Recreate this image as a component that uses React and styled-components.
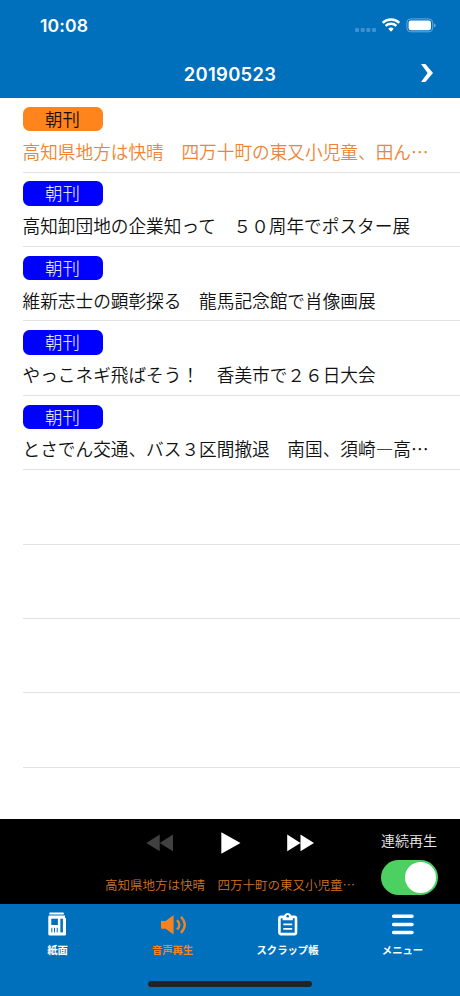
import React, { useState } from 'react';
import styled, { createGlobalStyle } from 'styled-components';

const GlobalStyle = createGlobalStyle`
  * {
    box-sizing: border-box;
  }

  body {
    margin: 0;
    font-family: 'Noto Sans CJK JP', sans-serif;
    background-color: white;
  }

  button {
    padding: 0;
    border: none;
    background: none;
    color: inherit;
    font: inherit;
  }

  svg {
    display: block;
  }
`;

const Screen = styled.div`
  width: 460px;
  height: 996px;
  display: flex;
  flex-direction: column;
  overflow: hidden;
`;

const StyledHeader = styled.header`
  height: 98px;
  flex-shrink: 0;
  background-color: #006fbc;
  color: white;
  font-family: 'Inter', sans-serif;
  font-weight: 600;
`;

const StatusBar = styled.div`
  height: 49px;
  padding: 3px 24px 0 40px;
  display: flex;
  justify-content: space-between;
  align-items: center;
`;

const Clock = styled.span`
  font-size: 17.6px;
  font-weight: 580;
  line-height: 22px;
  letter-spacing: 0.1px;
`;

const TitleBar = styled.div`
  height: 49px;
  padding: 0 26px;
  display: grid;
  grid-template-columns: 1fr auto 1fr;
  align-items: center;
`;

const DateTitle = styled.h1`
  grid-column: 2;
  margin: 0;
  font-size: 18.4px;
  font-weight: 580;
  line-height: 24px;
  letter-spacing: 0.3px;
`;

const NextButton = styled.button`
  justify-self: end;
  padding-bottom: 1px;
`;

const List = styled.ul`
  flex: 1;
  margin: 0;
  padding: 0 0 0 22.5px;
  list-style: none;
  overflow: hidden;
`;

const Item = styled.li`
  height: 74.4px;
  padding-top: 8.8px;
  border-bottom: 1px solid #e2e2e2;
  color: ${({ $active }) => ($active ? '#ee8434' : '#111')};

  &:first-child {
    height: 74.6px;
  }
`;

const Badge = styled.div`
  width: 80px;
  height: 24.5px;
  border-radius: 6.5px;
  background-color: ${({ $active }) => ($active ? '#ff841c' : '#0000ff')};
  color: ${({ $active }) => ($active ? '#1a0d00' : 'white')};
  font-size: 17.4px;
  font-weight: ${({ $active }) => ($active ? 350 : 300)};
  line-height: 24px;
  text-align: center;
`;

const Headline = styled.div`
  margin-top: 8.3px;
  font-size: 17.66px;
  font-weight: 350;
  line-height: 24px;
  white-space: nowrap;
`;

const StyledPlayer = styled.section`
  height: 84.5px;
  flex-shrink: 0;
  padding: 0 22.5px 0 105px;
  display: flex;
  justify-content: space-between;
  background-color: black;
`;

const PlayerMain = styled.div`
  width: 250px;
`;

const Controls = styled.div`
  height: 48px;
  padding: 0 40px 0 41px;
  display: flex;
  justify-content: space-between;
  align-items: center;
`;

const NowPlaying = styled.div`
  margin-top: 9px;
  color: #d27420;
  font-size: 12.5px;
  font-weight: 350;
  line-height: 18px;
  white-space: nowrap;
`;

const Continuous = styled.div`
  width: 57px;
  padding-top: 11px;
  display: flex;
  flex-direction: column;
  align-items: center;
  gap: 10px;
  color: #e8e8e8;
  font-size: 14px;
  font-weight: 350;
  line-height: 20px;
  white-space: nowrap;
`;

const Toggle = styled.button`
  width: 57px;
  height: 35px;
  padding: 2px;
  display: flex;
  justify-content: ${({ $on }) => ($on ? 'flex-end' : 'flex-start')};
  border-radius: 18px;
  background-color: ${({ $on }) => ($on ? '#4cd062' : '#555')};
`;

const Knob = styled.span`
  width: 31px;
  height: 31px;
  border-radius: 50%;
  background-color: white;
`;

const StyledFooter = styled.footer`
  height: 92.5px;
  flex-shrink: 0;
  display: flex;
  flex-direction: column;
  align-items: center;
  background-color: #006fbc;
`;

const Tabs = styled.nav`
  width: 100%;
  height: 77.5px;
  display: grid;
  grid-template-columns: repeat(4, 1fr);
`;

const Tab = styled.button`
  padding-top: 7px;
  display: flex;
  flex-direction: column;
  align-items: center;
  gap: 3.5px;
  color: ${({ $active }) => ($active ? '#f58220' : 'white')};
  font-size: 10.35px;
  font-weight: 700;
  line-height: 16px;
`;

const HomeIndicator = styled.div`
  width: 164px;
  height: 5.5px;
  border-radius: 3px;
  background-color: #202427;
`;

const articles = [
  '高知県地方は快晴　四万十町の東又小児童、田ん…',
  '高知卸団地の企業知って　５０周年でポスター展',
  '維新志士の顕彰探る　龍馬記念館で肖像画展',
  'やっこネギ飛ばそう！　香美市で２６日大会',
  'とさでん交通、バス３区間撤退　南国、須崎―高…',
];

const emptyRows = [0, 1, 2, 3];

const StatusIcons = () => (
  <svg width="82" height="20" viewBox="0 0 82 20">
    <g fill="#3d92d2">
      <rect x="1" y="12" width="4" height="4" rx="1" />
      <rect x="6.7" y="12" width="4" height="4" rx="1" />
      <rect x="12.4" y="12" width="4" height="4" rx="1" />
      <rect x="18" y="12" width="4" height="4" rx="1" />
    </g>
    <g fill="none" stroke="white" strokeWidth="2.4">
      <path d="M28.7 6.9C33.2 2.4 40.8 2.4 45.3 6.9" />
      <path d="M31.6 9.9C34.5 7.1 39.5 7.1 42.4 9.9" />
    </g>
    <path d="M34.3 12.7Q37 10.4 39.7 12.7L37 15.8Z" fill="white" />
    <rect x="52.9" y="2.9" width="25.8" height="12.9" rx="3.8" fill="none" stroke="#68abdc" />
    <rect x="54.6" y="4.5" width="22.4" height="9.7" rx="2.3" fill="white" />
    <path d="M80 7.3Q81.7 7.7 81.7 9.4Q81.7 11 80 11.5Z" fill="#68abdc" />
  </svg>
);

const PaperIcon = () => (
  <svg width="26" height="28" viewBox="0 0 26 28">
    <rect x="4.3" y="1.6" width="14.5" height="2" rx="0.5" fill="white" />
    <path
      d="M4.6 4.5H20V7H21V23.2Q21 24.4 19.8 24.4H4.8Q3.3 24.4 3.3 22.9V5.8Q3.3 4.5 4.6 4.5Z"
      fill="white"
    />
    <g fill="#006fbc">
      <rect x="6.3" y="7.7" width="6.6" height="6.3" />
      <rect x="15.4" y="7.7" width="2.5" height="13.7" />
      <rect x="6.3" y="16.8" width="1" height="4.6" />
      <rect x="9" y="16.8" width="1" height="4.6" />
      <rect x="11.7" y="16.8" width="1" height="4.6" />
    </g>
  </svg>
);

const SpeakerIcon = () => (
  <svg width="26" height="28" viewBox="0 0 26 28">
    <path d="M1 10.1H5.6L13.6 4V23.6L5.6 17.8H1Z" fill="#f58220" />
    <g fill="none" stroke="#f58220" strokeWidth="2.3">
      <path d="M17 9.1Q21.8 13.8 17 18.5" />
      <path d="M20.9 5.7Q28.7 13.8 20.9 21.9" />
    </g>
  </svg>
);

const ScrapIcon = () => (
  <svg width="26" height="28" viewBox="0 0 26 28">
    <rect x="4.4" y="5.9" width="16.6" height="17.2" rx="1.6" fill="none" stroke="white" strokeWidth="2.6" />
    <path d="M7.6 9.3V5.6H9C9.2 0.8 16.2 0.8 16.4 5.6H17.8V9.3Z" fill="white" />
    <circle cx="12.7" cy="5.2" r="1.3" fill="#006fbc" />
    <path d="M8.3 13.4H17.2M8.3 17.8H17.2" stroke="white" strokeWidth="1.7" />
  </svg>
);

const MenuIcon = () => (
  <svg width="26" height="28" viewBox="0 0 26 28">
    <path
      d="M3.6 5.2H22M3.6 13.4H22M3.6 21.6H22"
      stroke="white"
      strokeWidth="3.5"
      strokeLinecap="round"
    />
  </svg>
);

const tabs = [
  { label: '紙面', icon: <PaperIcon /> },
  { label: '音声再生', icon: <SpeakerIcon /> },
  { label: 'スクラップ帳', icon: <ScrapIcon /> },
  { label: 'メニュー', icon: <MenuIcon /> },
];

const Header = () => (
  <StyledHeader>
    <StatusBar>
      <Clock>10:08</Clock>
      <StatusIcons />
    </StatusBar>
    <TitleBar>
      <DateTitle>20190523</DateTitle>
      <NextButton aria-label="次へ">
        <svg width="14" height="20" viewBox="0 0 14 20">
          <path d="M1 1H5.4L13 10L5.4 19H1L7.6 10Z" fill="white" />
        </svg>
      </NextButton>
    </TitleBar>
  </StyledHeader>
);

const Player = () => {
  const [continuous, setContinuous] = useState(true);

  return (
    <StyledPlayer>
      <PlayerMain>
        <Controls>
          <button aria-label="前へ">
            <svg width="28" height="20" viewBox="0 0 28 20">
              <path d="M13.7 1.5V18.3L0.3 9.9ZM27 1.5V18.3L13.7 9.9Z" fill="#404040" />
            </svg>
          </button>
          <button aria-label="再生">
            <svg width="20" height="24" viewBox="0 0 20 24">
              <path d="M0.3 1.2L19.5 12L0.3 22.8Z" fill="white" />
            </svg>
          </button>
          <button aria-label="次へ">
            <svg width="28" height="20" viewBox="0 0 28 20">
              <path d="M0.2 1.5V18.3L13.5 9.9ZM13.5 1.5V18.3L27 9.9Z" fill="white" />
            </svg>
          </button>
        </Controls>
        <NowPlaying>高知県地方は快晴　四万十町の東又小児童…</NowPlaying>
      </PlayerMain>
      <Continuous>
        連続再生
        <Toggle $on={continuous} onClick={() => setContinuous(!continuous)} aria-label="連続再生">
          <Knob />
        </Toggle>
      </Continuous>
    </StyledPlayer>
  );
};

const App = () => {
  const [selected, setSelected] = useState(0);

  return (
    <>
      <GlobalStyle />
      <Screen>
        <Header />
        <List>
          {articles.map((title, index) => (
            <Item key={title} $active={index === selected} onClick={() => setSelected(index)}>
              <Badge $active={index === selected}>朝刊</Badge>
              <Headline>{title}</Headline>
            </Item>
          ))}
          {emptyRows.map((row) => (
            <Item key={row} />
          ))}
        </List>
        <Player />
        <StyledFooter>
          <Tabs>
            {tabs.map(({ label, icon }) => (
              <Tab key={label} $active={label === '音声再生'}>
                {icon}
                {label}
              </Tab>
            ))}
          </Tabs>
          <HomeIndicator />
        </StyledFooter>
      </Screen>
    </>
  );
};

export default App;
